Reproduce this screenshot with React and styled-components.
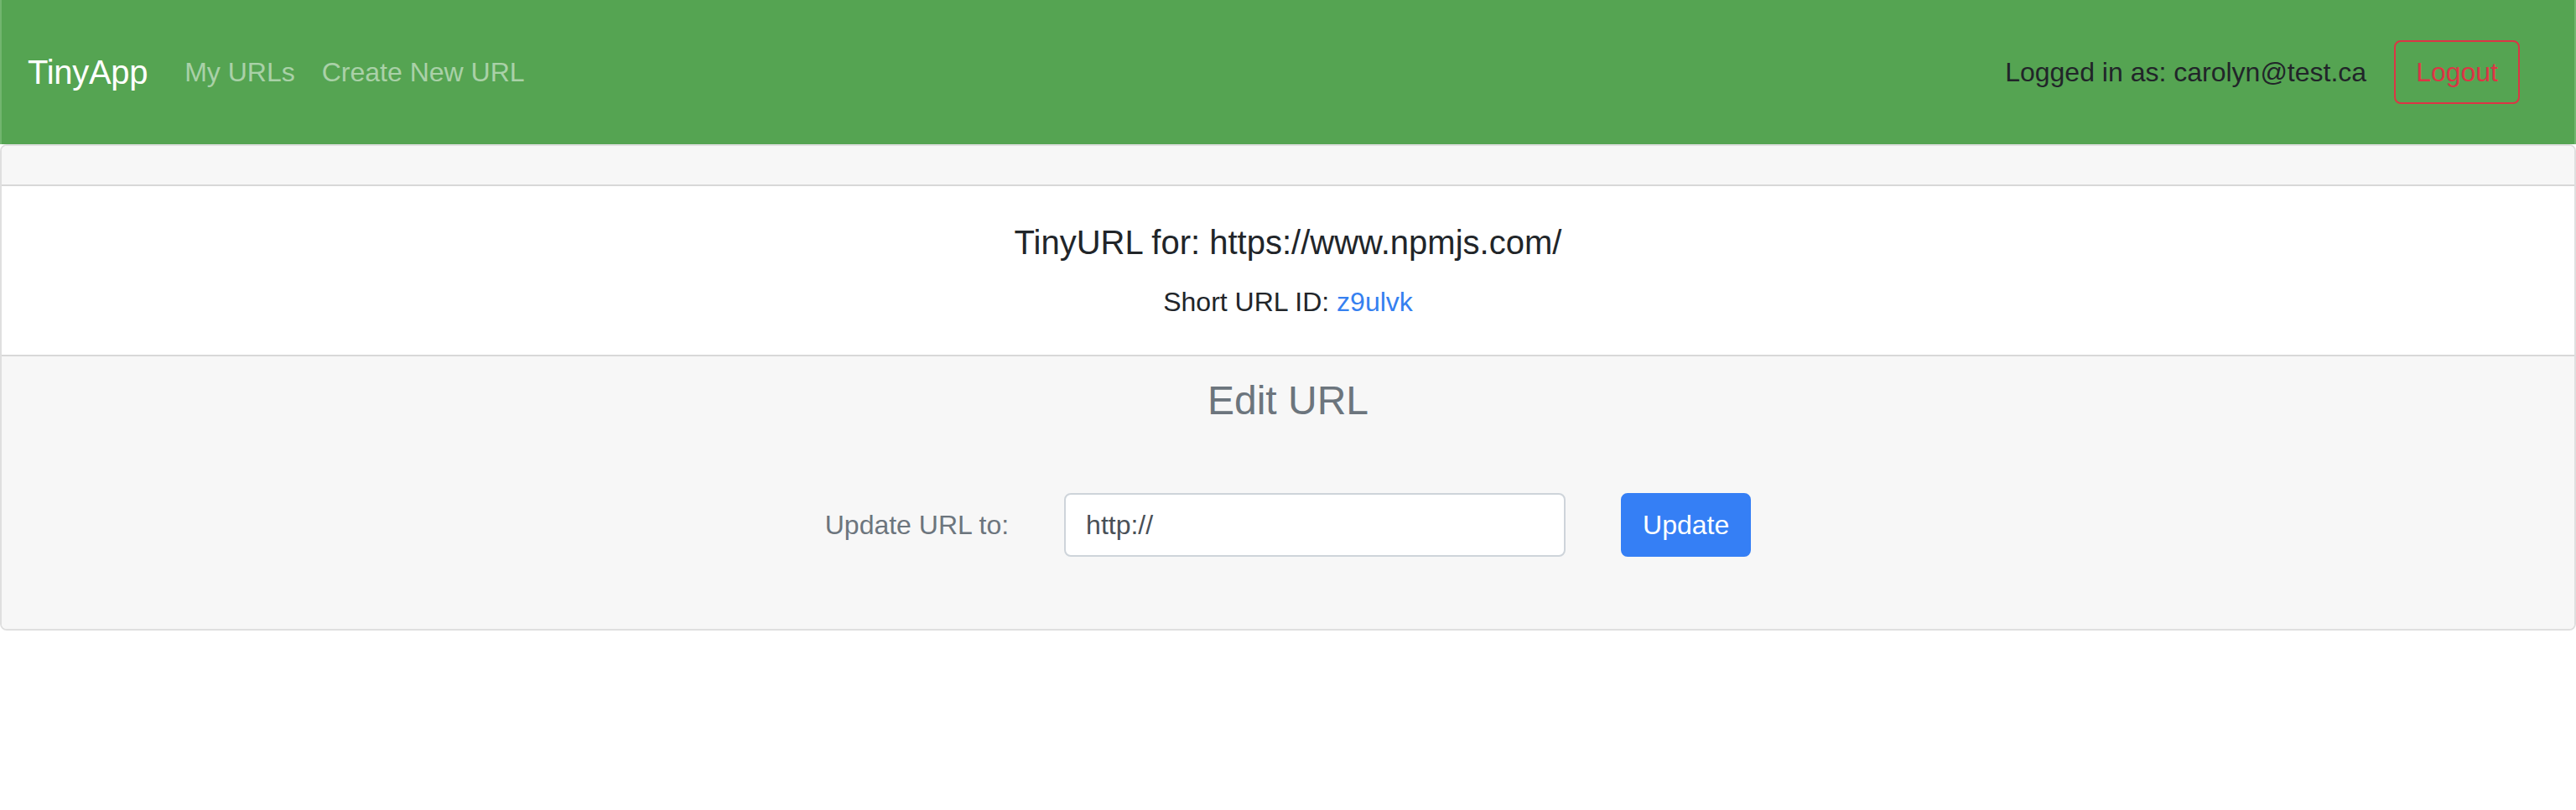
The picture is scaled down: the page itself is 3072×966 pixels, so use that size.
import React from "react";
import styled, { createGlobalStyle } from "styled-components";

const GlobalStyle = createGlobalStyle`
  * {
    box-sizing: border-box;
  }
  body {
    margin: 0;
    background: #fff;
    font-family: "Liberation Sans", Arial, sans-serif;
    color: #212529;
  }
`;

const Navbar = styled.nav`
  display: flex;
  align-items: center;
  height: 172px;
  padding: 0 65px 0 31px;
  background: #55a452;
  border-left: 2px solid #72b56f;
  border-right: 2px solid #72b56f;
`;
const Brand = styled.a`
  font-size: 40px;
  line-height: 60px;
  color: #fff;
  margin-right: 28px;
  letter-spacing: -0.3px;
  text-decoration: none;
`;
const NavLink = styled.a`
  font-size: 32px;
  line-height: 48px;
  padding: 0 16px;
  color: rgba(255, 255, 255, 0.5);
  text-decoration: none;
`;
const NavRight = styled.div`
  margin-left: auto;
  display: flex;
  align-items: center;
  gap: 33px;
`;
const UserText = styled.span`
  font-size: 32px;
  line-height: 48px;
  color: #212529;
`;
const Button = styled.button`
  font-family: inherit;
  font-size: 32px;
  line-height: 48px;
  padding: 12px 24px;
  border-radius: 8px;
  border: 2px solid ${(p) => (p.$outline ? "#dc3545" : "#357ff5")};
  background: ${(p) => (p.$outline ? "transparent" : "#357ff5")};
  color: ${(p) => (p.$outline ? "#dc3545" : "#fff")};
  cursor: pointer;
`;

const Card = styled.div`
  border: 2px solid rgba(0, 0, 0, 0.125);
  border-radius: 8px;
  overflow: hidden;
`;
const CardHeader = styled.div`
  height: 48px;
  background: #f7f7f7;
  border-bottom: 2px solid rgba(0, 0, 0, 0.125);
`;
const CardBody = styled.div`
  background: #fff;
  text-align: center;
  padding: 43px 40px 39px;
`;
const Title = styled.h5`
  margin: 0 0 23px;
  font-size: 40px;
  line-height: 48px;
  font-weight: 500;
`;
const ShortText = styled.p`
  margin: 0;
  font-size: 32px;
  line-height: 48px;
`;
const Link = styled.a`
  color: #3580f0;
  text-decoration: none;
`;
const CardFooter = styled.div`
  background: #f7f7f7;
  border-top: 2px solid rgba(0, 0, 0, 0.125);
  padding: 24px 40px 86px;
  text-align: center;
`;
const SubTitle = styled.h4`
  margin: 0;
  font-size: 48px;
  line-height: 58px;
  font-weight: 500;
  color: #6c757d;
`;
const Form = styled.form`
  margin-top: 81px;
  display: flex;
  justify-content: center;
  align-items: center;
  gap: 66px;
`;
const Label = styled.label`
  font-size: 32px;
  line-height: 48px;
  color: #6c757d;
`;
const Input = styled.input`
  width: 598px;
  height: 76px;
  padding: 0 24px;
  font-family: inherit;
  font-size: 32px;
  color: #495057;
  background: #fff;
  border: 2px solid #ced4da;
  border-radius: 8px;
  outline: none;
`;

const App = () => {
  return (
    <>
      <GlobalStyle />
      <Navbar>
        <Brand href="#">TinyApp</Brand>
        <NavLink href="#">My URLs</NavLink>
        <NavLink href="#">Create New URL</NavLink>
        <NavRight>
          <UserText>Logged in as: carolyn@test.ca</UserText>
          <Button $outline>Logout</Button>
        </NavRight>
      </Navbar>
      <Card>
        <CardHeader />
        <CardBody>
          <Title>TinyURL for: https://www.npmjs.com/</Title>
          <ShortText>
            Short URL ID: <Link href="#">z9ulvk</Link>
          </ShortText>
        </CardBody>
        <CardFooter>
          <SubTitle>Edit URL</SubTitle>
          <Form onSubmit={(e) => e.preventDefault()}>
            <Label htmlFor="longURL">Update URL to:</Label>
            <Input id="longURL" type="text" defaultValue="http://" />
            <Button type="submit">Update</Button>
          </Form>
        </CardFooter>
      </Card>
    </>
  );
};

export default App;
